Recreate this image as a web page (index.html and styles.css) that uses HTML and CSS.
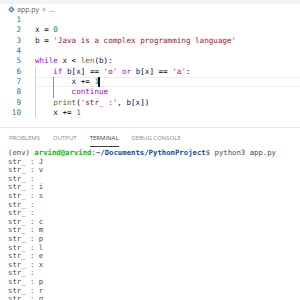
FILE: index.html
```html
<!DOCTYPE html>
<html>
<head>
<meta charset="utf-8">
<link rel="stylesheet" href="styles.css">
</head>
<body>
<div class="app">
  <div class="topbar"></div>
  <div class="editor">
    <div class="crumbs">
      <svg class="pyicon" width="7" height="7" viewBox="0 0 7 7"><path d="M3.5 0.3 L6.7 3.5 L3.5 6.7 L0.3 3.5 Z" fill="#4f7fb5"/><circle cx="3.5" cy="3.5" r="1.1" fill="#ffffff"/></svg>
      <span class="fname">app.py</span><span class="sep">&gt;</span><span class="dots">...</span>
    </div>
    <div class="lines">
      <div class="line"><span class="ln">1</span><span class="code"></span></div>
      <div class="line"><span class="ln">2</span><span class="code"><span class="v">x</span> = <span class="n">0</span></span></div>
      <div class="line"><span class="ln">3</span><span class="code"><span class="v">b</span> = <span class="s">'Java is a complex programming language'</span></span></div>
      <div class="line"><span class="ln">4</span><span class="code"></span></div>
      <div class="line"><span class="ln">5</span><span class="code"><span class="k">while</span> <span class="v">x</span> &lt; <span class="f">len</span>(<span class="v">b</span>):</span></div>
      <div class="line"><span class="ln">6</span><span class="code"><span class="ind"></span><span class="k">if</span> <span class="v">b</span>[<span class="v">x</span>] == <span class="s">'o'</span> <span class="k">or</span> <span class="v">b</span>[<span class="v">x</span>] == <span class="s">'a'</span>:</span></div>
      <div class="line cur"><span class="ln">7</span><span class="code"><span class="ind"></span><span class="ind act"></span><span class="v">x</span> += <span class="n">1</span><span class="caret"></span></span></div>
      <div class="line"><span class="ln">8</span><span class="code"><span class="ind"></span><span class="ind act"></span><span class="k">continue</span></span></div>
      <div class="line"><span class="ln">9</span><span class="code"><span class="ind"></span><span class="f">print</span>(<span class="s">'str_ :'</span>, <span class="v">b</span>[<span class="v">x</span>])</span></div>
      <div class="line"><span class="ln">10</span><span class="code"><span class="ind"></span><span class="v">x</span> += <span class="n">1</span></span></div>
    </div>
  </div>
  <div class="panel">
    <div class="tabs">
      <span class="tab">Problems</span>
      <span class="tab">Output</span>
      <span class="tab active">Terminal</span>
      <span class="tab">Debug Console</span>
    </div>
    <div class="term">
      <div class="tl">(env) <b class="g">arvind@arvind</b>:<b class="bl">~/Documents/PythonProject</b>$ python3 app.py</div>
      <div class="tl">str_ : J</div>
      <div class="tl">str_ : v</div>
      <div class="tl">str_ :  </div>
      <div class="tl">str_ : i</div>
      <div class="tl">str_ : s</div>
      <div class="tl">str_ :  </div>
      <div class="tl">str_ :  </div>
      <div class="tl">str_ : c</div>
      <div class="tl">str_ : m</div>
      <div class="tl">str_ : p</div>
      <div class="tl">str_ : l</div>
      <div class="tl">str_ : e</div>
      <div class="tl">str_ : x</div>
      <div class="tl">str_ :  </div>
      <div class="tl">str_ : p</div>
      <div class="tl">str_ : r</div>
      <div class="tl">str_ : g</div>
    </div>
  </div>
</div>
</body>
</html>
```
FILE: styles.css
```css
html, body {
  margin: 0;
  padding: 0;
  background: #ffffff;
  width: 300px;
  height: 300px;
  overflow: hidden;
}
.app {
  display: flex;
  flex-direction: column;
  width: 300px;
  height: 300px;
}
.topbar {
  height: 4px;
  background: #f3f3f3;
  flex: none;
}
.editor {
  height: 123px;
  flex: none;
  display: flex;
  flex-direction: column;
}
.crumbs {
  height: 11px;
  display: flex;
  align-items: center;
  padding-left: 8px;
  font-family: "Open Sans", "DejaVu Sans", sans-serif;
  font-size: 7px;
  color: #616161;
}
.pyicon {
  margin-right: 2px;
}
.sep {
  margin: 0 3px;
}
.lines {
  font-family: "DejaVu Sans Mono", monospace;
  font-size: 7.6px;
  line-height: 10.33px;
}
.line {
  display: flex;
  height: 10.33px;
  white-space: pre;
}
.line.cur .code {
  box-shadow: inset 0 1px 0 #eeeeee, inset 0 -1px 0 #eeeeee;
}
.ln {
  width: 21px;
  text-align: right;
  color: #237893;
  flex: none;
}
.code {
  display: block;
  margin-left: 14px;
  flex: 1;
  color: #000000;
  white-space: pre;
  height: 10.33px;
}
.ind {
  display: inline-block;
  vertical-align: top;
  width: 4ch;
  height: 10.33px;
  box-shadow: inset 1px 0 0 #d3d3d3;
}
.ind.act {
  box-shadow: inset 1px 0 0 #939393;
}
.caret {
  display: inline-block;
  vertical-align: top;
  width: 1.5px;
  height: 10px;
  margin-left: -1px;
  background: #111111;
}
.k { color: #af00db; }
.v { color: #001080; }
.f { color: #795e26; }
.s { color: #a31515; }
.n { color: #098658; }
.panel {
  flex: 1;
  border-top: 1px solid #e7e7e7;
  overflow: hidden;
}
.tabs {
  display: flex;
  gap: 13px;
  padding-left: 9px;
  height: 21px;
  font-family: "Open Sans", "DejaVu Sans", sans-serif;
  font-size: 6px;
  text-transform: uppercase;
  color: #8a8a8a;
}
.tab {
  padding-top: 4px;
  line-height: 12px;
  height: 14px;
  border-bottom: 1px solid transparent;
}
.tab.active {
  color: #424242;
  border-bottom-color: #424242;
}
.term {
  padding-left: 8px;
  font-family: "DejaVu Sans Mono", monospace;
  font-size: 7.3px;
  line-height: 8.6px;
  color: #4a4a4a;
}
.tl {
  white-space: pre;
  height: 8.6px;
}
.g { color: #00bc00; }
.bl { color: #0451a5; }
```
